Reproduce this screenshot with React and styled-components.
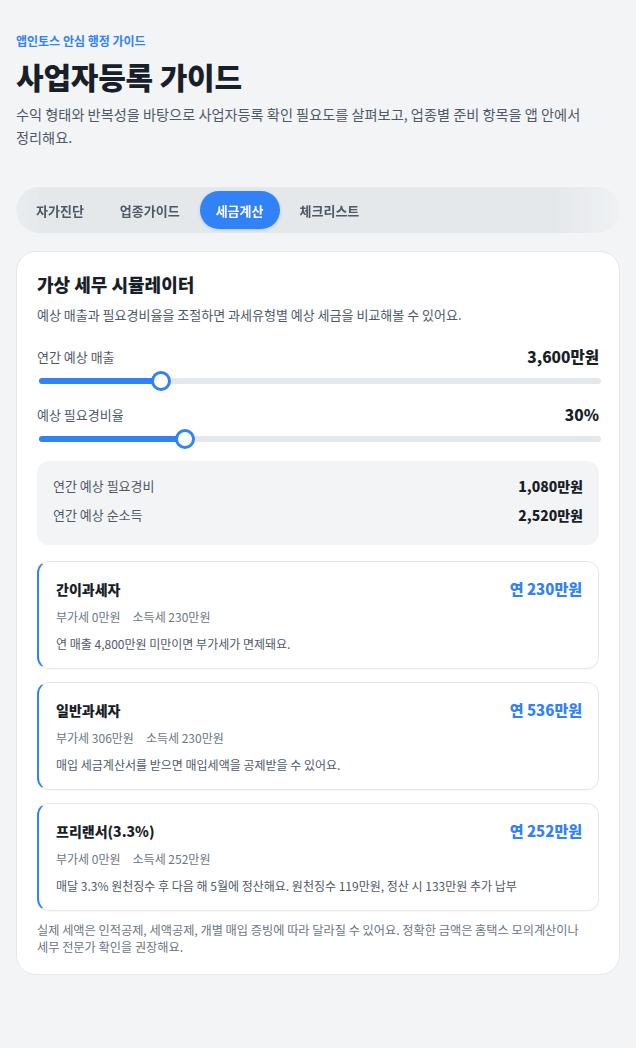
import React, { useState } from 'react';
import styled, { createGlobalStyle } from 'styled-components';

const GlobalStyle = createGlobalStyle`
	* { box-sizing: border-box; }
	body {
		margin: 0;
		background: #f2f4f6;
		font-family: 'Noto Sans CJK KR', 'Noto Sans', sans-serif;
		color: #191f28;
		word-break: keep-all;
	}
`;

const tabs = ['자가진단', '업종가이드', '세금계산', '체크리스트'];

const taxTypes = [
	{
		name: '간이과세자',
		total: '연 230만원',
		vat: '부가세 0만원',
		income: '소득세 230만원',
		note: '연 매출 4,800만원 미만이면 부가세가 면제돼요.',
	},
	{
		name: '일반과세자',
		total: '연 536만원',
		vat: '부가세 306만원',
		income: '소득세 230만원',
		note: '매입 세금계산서를 받으면 매입세액을 공제받을 수 있어요.',
	},
	{
		name: '프리랜서(3.3%)',
		total: '연 252만원',
		vat: '부가세 0만원',
		income: '소득세 252만원',
		note: '매달 3.3% 원천징수 후 다음 해 5월에 정산해요. 원천징수 119만원, 정산 시 133만원 추가 납부',
	},
];

const Slider = ({ label, value, percent }) => (
	<div>
		<SliderHead>
			<SliderLabel>{label}</SliderLabel>
			<SliderValue>{value}</SliderValue>
		</SliderHead>
		<Track>
			<Fill style={{ width: `calc(10px + ${percent} * (100% - 20px))` }} />
			<Thumb style={{ left: `calc(${percent} * (100% - 20px))` }} />
		</Track>
	</div>
);

const App = () => {
	const [active, setActive] = useState(2);

	return (
		<>
			<GlobalStyle />
			<Page>
				<Eyebrow>앱인토스 안심 행정 가이드</Eyebrow>
				<Title>사업자등록 가이드</Title>
				<Lead>
					수익 형태와 반복성을 바탕으로 사업자등록 확인 필요도를 살펴보고, 업종별 준비 항목을 앱 안에서
					정리해요.
				</Lead>

				<TabBar>
					{tabs.map((t, i) => (
						<Tab key={t} $active={i === active} onClick={() => setActive(i)}>
							{t}
						</Tab>
					))}
				</TabBar>

				<Card>
					<CardTitle>가상 세무 시뮬레이터</CardTitle>
					<CardDesc>예상 매출과 필요경비율을 조절하면 과세유형별 예상 세금을 비교해볼 수 있어요.</CardDesc>

					<Sliders>
						<Slider label="연간 예상 매출" value="3,600만원" percent={0.2066} />
						<Slider label="예상 필요경비율" value="30%" percent={0.25} />
					</Sliders>

					<Summary>
						<SummaryRow>
							<span>연간 예상 필요경비</span>
							<strong>1,080만원</strong>
						</SummaryRow>
						<SummaryRow>
							<span>연간 예상 순소득</span>
							<strong>2,520만원</strong>
						</SummaryRow>
					</Summary>

					<TaxList>
						{taxTypes.map((t) => (
							<TaxCard key={t.name}>
								<TaxHead>
									<TaxName>{t.name}</TaxName>
									<TaxTotal>{t.total}</TaxTotal>
								</TaxHead>
								<TaxBreakdown>
									<span>{t.vat}</span>
									<span>{t.income}</span>
								</TaxBreakdown>
								<TaxNote>{t.note}</TaxNote>
							</TaxCard>
						))}
					</TaxList>

					<Disclaimer>
						실제 세액은 인적공제, 세액공제, 개별 매입 증빙에 따라 달라질 수 있어요. 정확한 금액은 홈택스
						모의계산이나 세무 전문가 확인을 권장해요.
					</Disclaimer>
				</Card>
			</Page>
		</>
	);
};

const Page = styled.div`
	padding: 32px 16px 75px;
	min-height: 1048px;
`;

const Eyebrow = styled.div`
	font-size: 12px;
	font-weight: 700;
	color: #3182f6;
	line-height: 18px;
`;

const Title = styled.h1`
	margin: 6px 0 0;
	font-size: 30px;
	font-weight: 800;
	line-height: 40px;
	letter-spacing: -0.2px;
	color: #191f28;
`;

const Lead = styled.p`
	margin: 7px 0 0;
	font-size: 14.2px;
	line-height: 23px;
	color: #4e5968;
`;

const TabBar = styled.div`
	margin-top: 38px;
	display: flex;
	gap: 4px;
	padding: 4px;
	height: 46px;
	border-radius: 23px;
	background: #e5e8eb;
	-webkit-mask-image: linear-gradient(to right, rgba(0, 0, 0, 0.6), #000 24px, #000 calc(100% - 64px), rgba(0, 0, 0, 0.2));
	mask-image: linear-gradient(to right, rgba(0, 0, 0, 0.6), #000 24px, #000 calc(100% - 64px), rgba(0, 0, 0, 0.2));
`;

const Tab = styled.button`
	border: 0;
	padding: 0 16px;
	border-radius: 20px;
	font-family: inherit;
	font-size: 13px;
	font-weight: 700;
	cursor: pointer;
	background: ${(p) => (p.$active ? '#3182f6' : 'transparent')};
	color: ${(p) => (p.$active ? '#fff' : '#4e5968')};
	box-shadow: ${(p) => (p.$active ? '0 1px 3px rgba(49, 130, 246, 0.3)' : 'none')};
`;

const Card = styled.section`
	margin-top: 18px;
	background: #fff;
	border: 1px solid #e5e8eb;
	border-radius: 20px;
	padding: 19px 20px 18px;
`;

const CardTitle = styled.h2`
	margin: 0;
	font-size: 18px;
	font-weight: 800;
	line-height: 26px;
`;

const CardDesc = styled.p`
	margin: 8px 0 0;
	font-size: 13px;
	line-height: 20px;
	color: #4e5968;
`;

const Sliders = styled.div`
	margin-top: 20px;
	display: flex;
	flex-direction: column;
	gap: 19px;
`;

const SliderHead = styled.div`
	display: flex;
	justify-content: space-between;
	align-items: center;
`;

const SliderLabel = styled.span`
	font-size: 13px;
	color: #4e5968;
`;

const SliderValue = styled.span`
	font-size: 15.5px;
	font-weight: 800;
	color: #191f28;
`;

const Track = styled.div`
	position: relative;
	margin: 11px -2px 0 2px;
	height: 6px;
	border-radius: 3px;
	background: #e5e8eb;
`;

const Fill = styled.div`
	height: 100%;
	border-radius: 3px;
	background: #3182f6;
`;

const Thumb = styled.div`
	position: absolute;
	top: -7px;
	width: 20px;
	height: 20px;
	border-radius: 50%;
	background: #fff;
	border: 3px solid #3182f6;
`;

const Summary = styled.div`
	margin-top: 19px;
	background: #f2f4f6;
	border-radius: 12px;
	padding: 14px 16px 19px;
	display: flex;
	flex-direction: column;
	gap: 7px;
`;

const SummaryRow = styled.div`
	display: flex;
	justify-content: space-between;
	align-items: center;
	line-height: 22px;
	span {
		font-size: 13px;
		color: #4e5968;
	}
	strong {
		font-size: 14px;
		font-weight: 800;
	}
`;

const TaxList = styled.div`
	margin-top: 16px;
	display: flex;
	flex-direction: column;
	gap: 13px;
`;

const TaxCard = styled.div`
	border: 1px solid #e5e8eb;
	border-left: 2px solid #3182f6;
	border-radius: 12px;
	padding: 16px 16px 15px 17px;
	box-shadow: 0 1px 2px rgba(0, 0, 0, 0.03);
`;

const TaxHead = styled.div`
	display: flex;
	justify-content: space-between;
	align-items: center;
	line-height: 22px;
`;

const TaxName = styled.span`
	font-size: 14px;
	font-weight: 800;
`;

const TaxTotal = styled.span`
	font-size: 15px;
	font-weight: 800;
	color: #3182f6;
`;

const TaxBreakdown = styled.div`
	margin-top: 8px;
	display: flex;
	gap: 12px;
	font-size: 12px;
	line-height: 18px;
	color: #6b7684;
`;

const TaxNote = styled.p`
	margin: 9px 0 0;
	font-size: 12px;
	line-height: 18px;
	color: #4e5968;
`;

const Disclaimer = styled.p`
	margin: 11px 0 0;
	font-size: 12.2px;
	line-height: 17px;
	color: #6b7684;
`;

export default App;
